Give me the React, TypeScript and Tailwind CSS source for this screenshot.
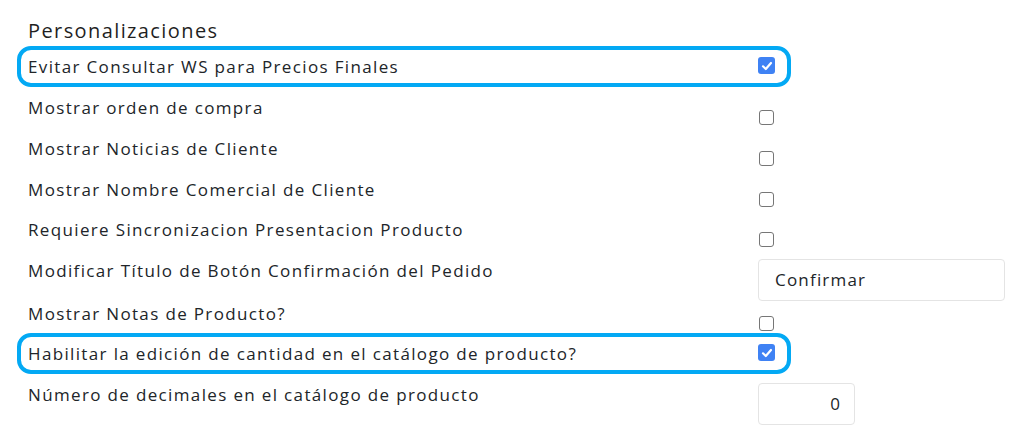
import React from 'react';

type Row = {
  label: string;
  kind: 'check' | 'text' | 'number';
  checked?: boolean;
  value?: string;
  highlight?: boolean;
  h: string;
};

const ROWS: Row[] = [
  { label: 'Evitar Consultar WS para Precios Finales', kind: 'check', checked: true, highlight: true, h: 'h-[41px]' },
  { label: 'Mostrar orden de compra', kind: 'check', h: 'h-[41px]' },
  { label: 'Mostrar Noticias de Cliente', kind: 'check', h: 'h-[41px]' },
  { label: 'Mostrar Nombre Comercial de Cliente', kind: 'check', h: 'h-[40px]' },
  { label: 'Requiere Sincronizacion Presentacion Producto', kind: 'check', h: 'h-[41px]' },
  { label: 'Modificar Título de Botón Confirmación del Pedido', kind: 'text', value: 'Confirmar', h: 'h-[43px]' },
  { label: 'Mostrar Notas de Producto?', kind: 'check', h: 'h-[40px]' },
  { label: 'Habilitar la edición de cantidad en el catálogo de producto?', kind: 'check', checked: true, highlight: true, h: 'h-[41px]' },
  { label: 'Número de decimales en el catálogo de producto', kind: 'number', value: '0', h: 'h-[41px]' },
];

function CheckBox({ checked, centered }: { checked?: boolean; centered?: boolean }) {
  if (checked) {
    return (
      <div className={`${centered ? 'mt-[11px]' : 'mt-[23px]'} w-[17px] h-[17px] rounded-[3px] bg-[#3f82f4] flex items-center justify-center`}>
        <svg width="12" height="12" viewBox="0 0 12 12">
          <path d="M2 6.3 L4.8 9 L10 3" fill="none" stroke="#fff" strokeWidth="2.2" strokeLinecap="round" strokeLinejoin="round" />
        </svg>
      </div>
    );
  }
  return <div className="mt-[23px] ml-[1px] w-[15px] h-[15px] rounded-[3px] border-[1.5px] border-[#767676] bg-white" />;
}

function Control({ row }: { row: Row }) {
  if (row.kind === 'check') return <CheckBox checked={row.checked} centered={row.highlight} />;
  if (row.kind === 'text') {
    return (
      <div className="mt-[9px] w-[247px] h-[42px] border border-[#e4e4e4] rounded-[4px] flex items-center px-[16px] text-[17px] tracking-[1.2px] text-[#212529]">
        {row.value}
      </div>
    );
  }
  return (
    <div className="mt-[9px] w-[97px] h-[42px] border border-[#e4e4e4] rounded-[4px] flex items-center justify-end pr-[14px] text-[17px] text-[#212529]">
      {row.value}
    </div>
  );
}

export default function App() {
  return (
    <div className="w-[1035px] h-[445px] bg-white overflow-hidden font-['Open_Sans',sans-serif] text-[#212529]">
      <div className="pl-[28px] pr-[30px] pt-[16px]">
        <h2 className="text-[20px] leading-[30px] font-medium tracking-[1.4px] text-[#1f1f1f]">Personalizaciones</h2>
        <div>
          {ROWS.map((row) => (
            <div key={row.label} className={`relative flex ${row.h}`}>
              {row.highlight && (
                <div className="absolute -left-[11px] top-0 w-[774px] h-[41px] border-4 border-[#03a9f4] rounded-[14px] pointer-events-none" />
              )}
              <div className="w-[730px] h-[40px] flex items-center text-[17px] leading-none tracking-[1.35px]">{row.label}</div>
              <Control row={row} />
            </div>
          ))}
        </div>
      </div>
    </div>
  );
}
